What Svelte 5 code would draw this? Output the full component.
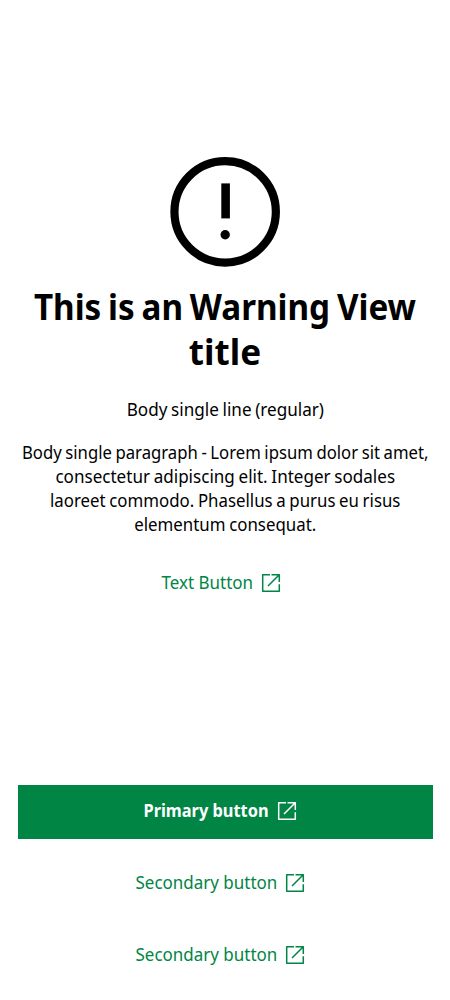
<script>
  const paragraph = [
    { text: 'Body single paragraph - Lorem ipsum dolor sit amet,', scale: 0.927 },
    { text: 'consectetur adipiscing elit. Integer sodales', scale: 0.948 },
    { text: 'laoreet commodo. Phasellus a purus eu risus', scale: 0.935 },
    { text: 'elementum consequat.', scale: 0.937 }
  ];
  const actions = [
    { label: 'Primary button', kind: 'primary' },
    { label: 'Secondary button', kind: 'secondary' },
    { label: 'Secondary button', kind: 'secondary' }
  ];
</script>

{#snippet external()}
  <svg class="external" width="20" height="20" viewBox="0 0 20 20" fill="none" stroke="currentColor" stroke-width="1.5" stroke-linejoin="round" aria-hidden="true">
    <path d="M9 1.7H1.7V18.3H18.3V11.3M10.5 1.7H18.3V9M18 2L7 13" />
  </svg>
{/snippet}

<main>
  <section class="content">
    <svg class="warning" width="110" height="110" viewBox="0 0 110 110" aria-hidden="true">
      <circle cx="55.15" cy="54.85" r="50.7" fill="none" stroke="#000" stroke-width="8.2" />
      <rect x="51.3" y="26.4" width="8.6" height="35" />
      <circle cx="55.2" cy="77.7" r="4.7" />
    </svg>
    <h1><span class="first">This is an Warning View</span><span class="second">title</span></h1>
    <p class="single">Body single line (regular)</p>
    <p>
      {#each paragraph as line}
        <span style="transform: scaleX({line.scale})">{line.text}</span>
      {/each}
    </p>
    <button class="text"><span>Text Button</span>{@render external()}</button>
  </section>
  <footer>
    {#each actions as action}
      <button class={action.kind}><span>{action.label}</span>{@render external()}</button>
    {/each}
  </footer>
</main>

<style>
  :global(body) { margin: 0; background: #fff; }
  main {
    box-sizing: border-box;
    height: 1000px;
    padding: 157px 17.5px 17.5px;
    display: flex;
    flex-direction: column;
    justify-content: space-between;
    overflow: hidden;
    color: #000;
    font: 400 18px/24px "Noto Sans", sans-serif;
    text-align: center;
  }
  .content { display: flex; flex-direction: column; align-items: center; }
  .warning { display: block; }
  h1 { margin: 17px 0 0; font-size: 36.5px; line-height: 45px; font-weight: 700; }
  h1 span, p span { display: block; white-space: nowrap; }
  .first { transform: scaleX(0.91); word-spacing: -2px; }
  .second { transform: scaleX(0.96); }
  p { margin: 0; word-spacing: -0.8px; }
  .single { margin: 23px 0 19px; transform: translateX(0.5px) scaleX(0.95); }
  button {
    box-sizing: border-box;
    height: 54px;
    padding: 0 10.5px 1px 0;
    border: 0;
    background: none;
    color: #008545;
    font: inherit;
    display: flex;
    align-items: center;
    justify-content: center;
    gap: 8.5px;
  }
  button span {
    width: 142px;
    white-space: nowrap;
    text-align: left;
    transform-origin: left;
    transform: translate(0.5px, -1px) scaleX(0.943);
  }
  .external { flex: none; }
  .text { margin-top: 20.5px; padding-right: 8px; }
  .text span { width: 91px; }
  footer { display: flex; flex-direction: column; gap: 18px; }
  .primary { background: #008545; color: #fff; font-weight: 700; }
  .primary span { width: 125px; transform: translate(0.5px, -1px) scaleX(0.909); }
</style>
